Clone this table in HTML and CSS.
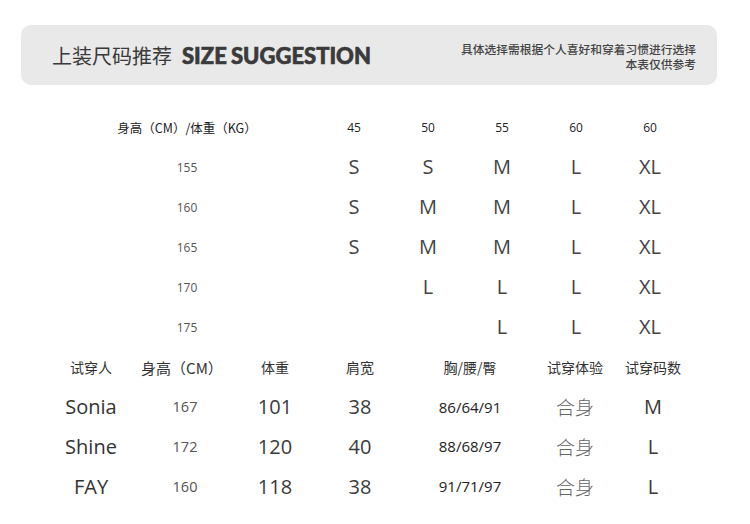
FILE: index.html
```html
<!DOCTYPE html>
<html lang="zh">
<head>
<meta charset="utf-8">
<title>上装尺码推荐</title>
<link rel="stylesheet" href="styles.css">
</head>
<body>
<div class="page">
  <header class="banner">
    <h1 class="title"><span class="title-cn">上装尺码推荐</span><span class="title-en">SIZE SUGGESTION</span></h1>
    <div class="note">
      <p class="note-line">具体选择需根据个人喜好和穿着习惯进行选择</p>
      <p class="note-line">本表仅供参考</p>
    </div>
  </header>

  <section class="size-grid">
    <div class="hd-label">身高（CM）/体重（KG）</div>
    <div class="hd-num">45</div><div class="hd-num">50</div><div class="hd-num">55</div><div class="hd-num">60</div><div class="hd-num">60</div>

    <div class="row-label">155</div>
    <div class="sz">S</div><div class="sz">S</div><div class="sz">M</div><div class="sz">L</div><div class="sz">XL</div>

    <div class="row-label">160</div>
    <div class="sz">S</div><div class="sz">M</div><div class="sz">M</div><div class="sz">L</div><div class="sz">XL</div>

    <div class="row-label">165</div>
    <div class="sz">S</div><div class="sz">M</div><div class="sz">M</div><div class="sz">L</div><div class="sz">XL</div>

    <div class="row-label">170</div>
    <div class="sz"></div><div class="sz">L</div><div class="sz">L</div><div class="sz">L</div><div class="sz">XL</div>

    <div class="row-label">175</div>
    <div class="sz"></div><div class="sz"></div><div class="sz">L</div><div class="sz">L</div><div class="sz">XL</div>
  </section>

  <section class="fit-grid">
    <div class="fh">试穿人</div><div class="fh">身高（CM）</div><div class="fh">体重</div><div class="fh">肩宽</div><div class="fh">胸/腰/臀</div><div class="fh">试穿体验</div><div class="fh">试穿码数</div>

    <div class="name">Sonia</div><div class="ht">167</div><div class="big">101</div><div class="big">38</div><div class="bwh">86/64/91</div><div class="fit">合身</div><div class="big">M</div>

    <div class="name">Shine</div><div class="ht">172</div><div class="big">120</div><div class="big">40</div><div class="bwh">88/68/97</div><div class="fit">合身</div><div class="big">L</div>

    <div class="name">FAY</div><div class="ht">160</div><div class="big">118</div><div class="big">38</div><div class="bwh">91/71/97</div><div class="fit">合身</div><div class="big">L</div>
  </section>
</div>
</body>
</html>
```

FILE: styles.css
```css
html, body {
  margin: 0;
  padding: 0;
  background: #ffffff;
}

body {
  font-family: "Open Sans", "Noto Sans CJK SC", sans-serif;
  color: #333;
}

.page {
  width: 750px;
  height: 524px;
  overflow: hidden;
}

.banner {
  margin: 25px 0 0 21px;
  width: 696px;
  height: 60px;
  background: #e9e9e9;
  border-radius: 10px;
  box-sizing: border-box;
  padding: 0 21px 0 31px;
  display: flex;
  align-items: center;
  justify-content: space-between;
}

.title {
  margin: 0;
  display: flex;
  align-items: center;
  font-weight: normal;
}

.title-cn {
  font-family: "Noto Sans CJK SC", sans-serif;
  font-size: 20px;
  font-weight: 400;
  color: #3a3a3a;
  margin-right: 10px;
}

.title-en {
  font-family: "Lato", "Noto Sans", sans-serif;
  font-weight: 900;
  font-size: 22px;
  color: #3a3a3a;
  letter-spacing: 0;
  word-spacing: -1px;
  -webkit-text-stroke: 0.6px #3a3a3a;
}

.note {
  display: flex;
  flex-direction: column;
  align-items: flex-end;
  gap: 0;
  padding-top: 1px;
}

.note-line {
  margin: 0;
  font-family: "Noto Sans CJK SC", sans-serif;
  font-size: 11.75px;
  line-height: 15px;
  height: 15px;
  font-weight: 500;
  color: #444;
  white-space: nowrap;
}

.size-grid {
  margin: 22px 0 0 100px;
  display: grid;
  grid-template-columns: 217px repeat(5, 74px);
  grid-auto-rows: 40px;
  align-items: center;
  text-align: center;
}

.hd-label {
  font-family: "Noto Sans CJK SC", sans-serif;
  font-size: 12.5px;
  color: #222;
  padding-right: 43px;
}

.hd-num {
  font-size: 12px;
  color: #222;
}

.row-label {
  font-size: 12px;
  color: #555;
  padding-right: 43px;
}

.sz {
  font-size: 20px;
  color: #444;
  line-height: 1;
}

.fit-grid {
  margin: 0 0 0 50px;
  display: grid;
  grid-template-columns: 82px 100px 86px 84px 136px 74px 82px;
  grid-template-rows: 40px 39px 40px 40px;
  align-items: center;
  text-align: center;
}

.fh {
  font-family: "Noto Sans CJK SC", sans-serif;
  font-size: 14px;
  color: #333;
}

.fh:nth-child(2) {
  font-size: 15px;
}

.name {
  font-size: 20px;
  color: #333;
}

.ht {
  font-size: 14.5px;
  color: #555;
  padding-left: 6px;
}

.big {
  font-size: 20px;
  color: #3a3a3a;
}

.bwh {
  font-size: 15px;
  color: #222;
}

.fit {
  font-family: "Noto Sans CJK SC", sans-serif;
  font-size: 19px;
  font-weight: 300;
  color: #666;
}
```
